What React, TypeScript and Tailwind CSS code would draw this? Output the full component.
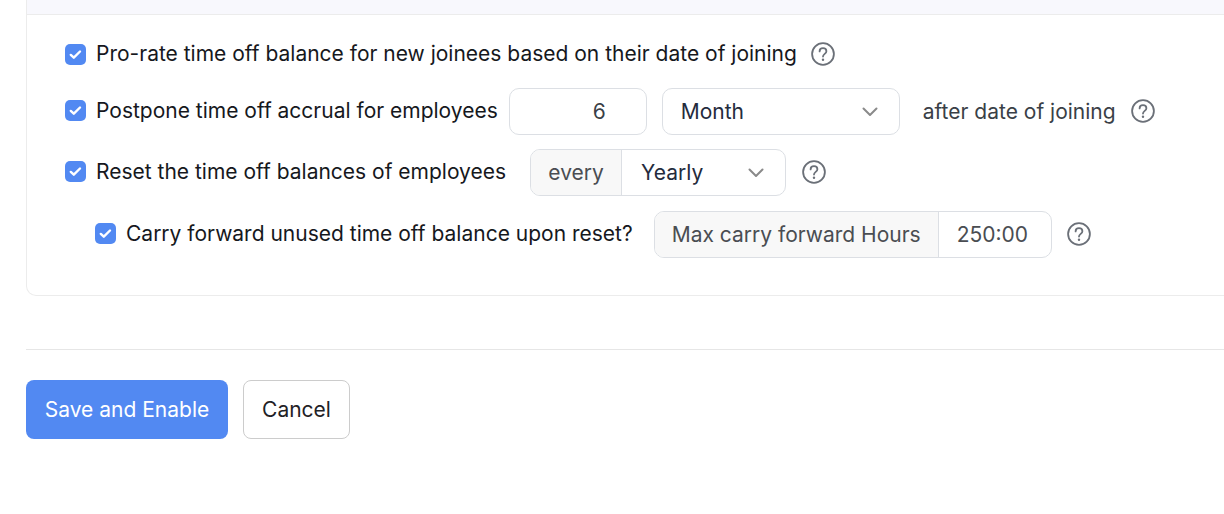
import React from "react";

const Check = ({ up }: { up?: boolean }) => (
  <span className={up ? "mb-[2px] flex h-[21px] w-[21px] shrink-0 items-center justify-center rounded-[5px] bg-[#5289f2]" : "flex h-[21px] w-[21px] shrink-0 items-center justify-center rounded-[5px] bg-[#5289f2]"}>
    <svg width="13" height="13" viewBox="0 0 13 13" fill="none">
      <path d="M1.8 6.9l3 2.8 6.2-6.2" stroke="#fff" strokeWidth="2.4" strokeLinecap="round" strokeLinejoin="round" />
    </svg>
  </span>
);

const Help = () => (
  <svg width="24" height="24" viewBox="0 0 24 24" fill="none" className="shrink-0">
    <circle cx="12" cy="12" r="10.9" stroke="#6b7078" strokeWidth="1.8" />
    <path d="M8.6 9.4c0-1.9 1.5-3.2 3.4-3.2s3.4 1.2 3.4 3c0 2.6-3.4 2.7-3.4 5.3" stroke="#6b7078" strokeWidth="1.8" strokeLinecap="round" />
    <circle cx="12" cy="17.7" r="1.2" fill="#6b7078" />
  </svg>
);

const Chevron = () => (
  <svg width="16" height="10" viewBox="0 0 16 10" fill="none" className="shrink-0">
    <path d="M1.5 1.5L8 8l6.5-6.5" stroke="#8a8a8a" strokeWidth="2" strokeLinecap="round" strokeLinejoin="round" />
  </svg>
);

export default function App() {
  return (
    <div className="h-[514px] w-[1224px] overflow-hidden bg-white pl-[26px] font-['Inter',sans-serif] text-[21px] leading-[24px] text-[#16181d]">
      <div className="h-[296px] w-[1300px] rounded-b-[10px] border-x border-b border-[#ececec]">
        <div className="h-[15px] border-b border-[#ececec] bg-[#f8f8fd]" />
        <div className="flex flex-col pl-[38px] pt-[22px]">
          <div className="flex h-[34px] items-center gap-[10px]">
            <Check />
            <span>Pro-rate time off balance for new joinees based on their date of joining</span>
            <span className="ml-[4px]"><Help /></span>
          </div>
          <div className="mt-[16px] flex h-[48px] items-center">
            <Check up />
            <span className="ml-[10px]">Postpone time off accrual for employees</span>
            <div className="ml-[11px] flex h-[47px] w-[138px] items-center justify-center rounded-[10px] border border-[#dcdfe4] pl-[43px] pt-[2px] text-[#3a3f47]">6</div>
            <div className="ml-[15px] flex h-[47px] w-[238px] items-center justify-between rounded-[10px] border border-[#dcdfe4] pl-[18px] pr-[21px] pt-[2px] text-[#242b3d]">
              <span>Month</span>
              <Chevron />
            </div>
            <span className="ml-[23px] pt-[2px] text-[#3a3f47]">after date of joining</span>
            <span className="ml-[15px]"><Help /></span>
          </div>
          <div className="mt-[13px] flex h-[48px] items-center">
            <Check up />
            <span className="ml-[10px]">Reset the time off balances of employees</span>
            <div className="ml-[24px] flex h-[47px] w-[256px] items-stretch overflow-hidden rounded-[10px] border border-[#dcdfe4]">
              <span className="flex w-[91px] items-center justify-center border-r border-[#dcdfe4] bg-[#f8f8f8] pt-[2px] text-[#4a4d52]">every</span>
              <div className="flex flex-1 items-center justify-between pl-[19px] pr-[21px] pt-[2px] text-[#242b3d]">
                <span>Yearly</span>
                <Chevron />
              </div>
            </div>
            <span className="ml-[16px]"><Help /></span>
          </div>
          <div className="mt-[14px] flex h-[48px] items-center pl-[30px]">
            <Check up />
            <span className="ml-[10px]">Carry forward unused time off balance upon reset?</span>
            <div className="ml-[21px] flex h-[47px] w-[398px] items-stretch overflow-hidden rounded-[10px] border border-[#dcdfe4] text-[#4a4d52]">
              <span className="flex w-[284px] items-center justify-center border-r border-[#dcdfe4] bg-[#f8f8f8] pt-[2px]">Max carry forward Hours</span>
              <span className="flex flex-1 items-center pl-[18px] pt-[2px]">250:00</span>
            </div>
            <span className="ml-[15px]"><Help /></span>
          </div>
        </div>
      </div>
      <div className="mt-[53px] h-px w-[1300px] bg-[#e6e6e6]" />
      <div className="mt-[30px] flex gap-[15px]">
        <button className="h-[59px] w-[202px] rounded-[8px] bg-[#5289f2] text-white">Save and Enable</button>
        <button className="h-[59px] w-[107px] rounded-[8px] border border-[#cccccc] bg-white text-[#1f2226]">Cancel</button>
      </div>
    </div>
  );
}
